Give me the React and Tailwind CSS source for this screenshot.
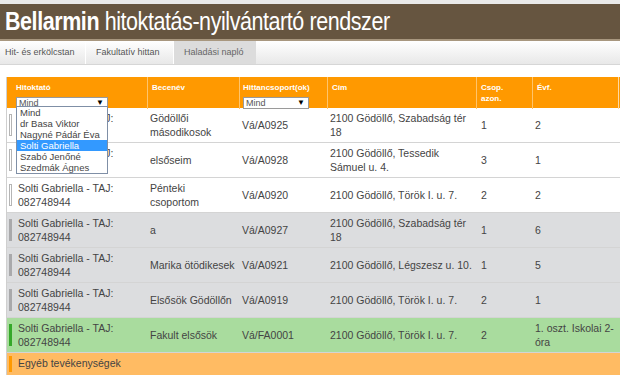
const rows = [
  { teacher: "Solti Gabriella - TAJ: 082748944", nick: "Gödöllői másodikosok", group: "Vá/A0925", addr: "2100 Gödöllő, Szabadság tér 18", id: "1", year: "2", kind: "white" },
  { teacher: "Solti Gabriella - TAJ: 082748944", nick: "elsőseim", group: "Vá/A0928", addr: "2100 Gödöllő, Tessedik Sámuel u. 4.", id: "3", year: "1", kind: "white" },
  { teacher: "Solti Gabriella - TAJ: 082748944", nick: "Pénteki\ncsoportom", group: "Vá/A0920", addr: "2100 Gödöllő, Török I. u. 7.", id: "2", year: "2", kind: "white" },
  { teacher: "Solti Gabriella - TAJ: 082748944", nick: "a", group: "Vá/A0927", addr: "2100 Gödöllő, Szabadság tér 18", id: "1", year: "6", kind: "gray" },
  { teacher: "Solti Gabriella - TAJ: 082748944", nick: "Marika ötödikesek", group: "Vá/A0921", addr: "2100 Gödöllő, Légszesz u. 10.", id: "1", year: "5", kind: "gray" },
  { teacher: "Solti Gabriella - TAJ: 082748944", nick: "Elsősök Gödöllőn", group: "Vá/A0919", addr: "2100 Gödöllő, Török I. u. 7.", id: "2", year: "1", kind: "gray" },
  { teacher: "Solti Gabriella - TAJ: 082748944", nick: "Fakult elsősök", group: "Vá/FA0001", addr: "2100 Gödöllő, Török I. u. 7.", id: "2", year: "1. oszt. Iskolai 2-óra", kind: "green" },
];

const rowBg = { white: "bg-white", gray: "bg-[#dcdddf]", green: "bg-[#a9dc9e]" };
const barCls = {
  white: "bg-white border border-[#b5b5b5]",
  gray: "bg-[#a9a9ab]",
  green: "bg-[#35a82a]",
};

const teachers = ["Mind", "dr Basa Viktor", "Nagyné Pádár Éva", "Solti Gabriella", "Szabó Jenőné", "Szedmák Ágnes"];

const grid = "grid grid-cols-[140px_92px_88px_149px_56px_86px_40px]";

function Select({ width }) {
  return (
    <div className={`${width} h-[12px] bg-white border border-[#9a9a9a] flex items-center justify-between pl-[2px] pr-[3px] font-normal`}>
      <span className="text-[9px] leading-none text-[#555]">Mind</span>
      <span className="text-[8px] leading-none text-black">▼</span>
    </div>
  );
}

export default function App() {
  return (
    <div className="w-[620px] h-[376px] overflow-hidden bg-white relative" style={{ fontFamily: '"Liberation Sans", Arial, sans-serif' }}>
      <div className="h-[4px] bg-[#e9e9e9]" />
      {/* Title bar */}
      <div className="h-[37px] bg-[#665540] flex items-center pl-[5px] border-b-2 border-[#a8977f]">
        <h1
          className="text-white text-[25px] leading-none tracking-[-0.5px] origin-left scale-x-[0.86] whitespace-nowrap"
          style={{ fontFamily: '"Liberation Sans Narrow", "Arial Narrow", "Liberation Sans", sans-serif' }}
        >
          <span className="font-bold">Bellarmin</span> hitoktatás-nyilvántartó rendszer
        </h1>
      </div>
      {/* Nav */}
      <div className="h-[24px] flex bg-gradient-to-b from-white to-[#e8e8e8] border-b border-[#d6d6d6] text-[9px] text-[#555]">
        <div className="w-[86px] flex items-center pl-[5px] border-r border-white">Hit- és erkölcstan</div>
        <div className="w-[88px] flex items-center pl-[10px] border-r border-white">Fakultatív hittan</div>
        <div className="w-[82px] flex items-center pl-[10px] bg-[#dcdcdc] text-[#666]">Haladási napló</div>
      </div>

      {/* Table */}
      <div className="mt-[12px] ml-[6px] w-[660px] border-l border-[#cfcfcf]">
        <div className={`${grid} h-[31px] bg-[#ff9900] text-white text-[8px] font-bold leading-[11px]`}>
          <div className="pl-[9px] pt-[5px]">
            Hitoktató
            <div className="mt-[4px]"><Select width="w-[92px]" /></div>
          </div>
          <div className="pl-[4px] pt-[5px] border-l border-[#ffc46b]">Becenév</div>
          <div className="pl-[3px] pt-[5px] border-l border-[#ffc46b] overflow-hidden whitespace-nowrap">
            Hittancsoport(ok)
            <div className="mt-[4px]"><Select width="w-[66px]" /></div>
          </div>
          <div className="pl-[4px] pt-[5px] border-l border-[#ffc46b]">Cím</div>
          <div className="pl-[4px] pt-[5px] border-l border-[#ffc46b]">Csop.<br />azon.</div>
          <div className="pl-[4px] pt-[5px] border-l border-[#ffc46b]">Évf.</div>
          <div className="border-l border-[#ffd9a0]" />
        </div>

        {rows.map((r, i) => (
          <div key={i} className={`${grid} h-[35px] ${rowBg[r.kind]} border-b border-[#d4d4d4] text-[10.5px] leading-[14px] text-[#444]`}>
            <div className="flex items-center pl-[2px]">
              <div className={`w-[3px] h-[22px] shrink-0 ${barCls[r.kind]}`} />
              <div className="pl-[6px] pr-[20px]">{r.teacher}</div>
            </div>
            <div className="flex items-center pl-[3px] whitespace-pre-line">{r.nick}</div>
            <div className="flex items-center pl-[3px]">{r.group}</div>
            <div className="flex items-center pl-[3px]">{r.addr}</div>
            <div className="flex items-center pl-[5px]">{r.id}</div>
            <div className="flex items-center pl-[3px] pr-[4px]">{r.year}</div>
            <div />
          </div>
        ))}

        <div className="h-[22px] bg-[#ffbb63] flex items-center pl-[2px] text-[10.5px] text-[#444]">
          <div className="w-[3px] h-[16px] bg-[#ff9900]" />
          <div className="pl-[6px]">Egyéb tevékenységek</div>
        </div>
      </div>

      {/* Open dropdown list */}
      <div className="absolute left-[16px] top-[106px] w-[92px] bg-white border border-[#7f8fa6] text-[9.5px] leading-[11px] text-[#444]">
        {teachers.map((t) => (
          <div key={t} className={`pl-[3px] ${t === "Solti Gabriella" ? "bg-[#3399ff] text-white" : ""}`}>{t}</div>
        ))}
      </div>
    </div>
  );
}
